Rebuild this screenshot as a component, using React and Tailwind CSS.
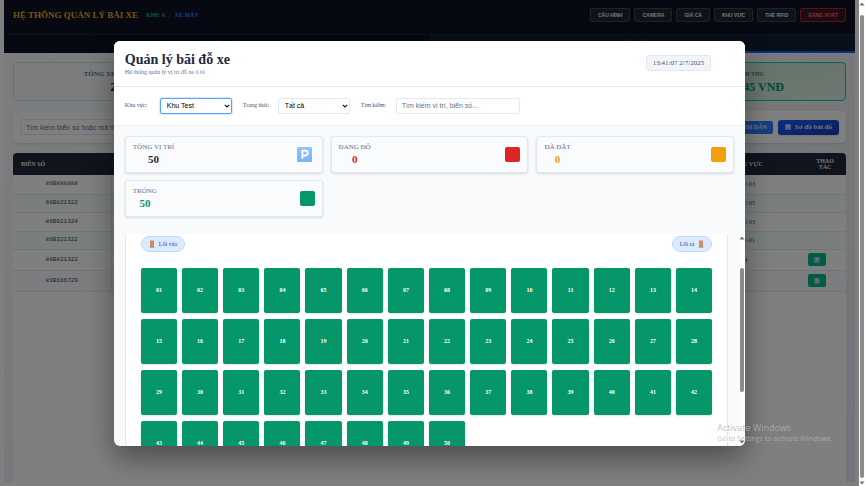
import { useState } from "react";

const menu = ["CẤU HÌNH", "CAMERA", "GIÁ CẢ", "KHU VỰC", "THẺ RFID"];

const vehicles = [
  { plate: "86B888888", time: "12:01:22", area: "KHU-03" },
  { plate: "66B821322", time: "12:14:05", area: "KHU-05" },
  { plate: "86B921324", time: "12:32:48", area: "KHU-03" },
  { plate: "86B321322", time: "12:40:10", area: "KHU-01" },
  { plate: "86B821322", time: "13:02:37", area: "Khu4", action: true },
  { plate: "81B166729", time: "13:20:51", area: "Khu", action: true },
];

const stats = [
  { label: "TỔNG VỊ TRÍ", value: 50, text: "text-slate-800" },
  { label: "ĐANG ĐỖ", value: 0, text: "text-[#dc2626]", box: "bg-[#dc2626]" },
  { label: "ĐÃ ĐẶT", value: 0, text: "text-[#f59e0b]", box: "bg-[#f59e0b]" },
  { label: "TRỐNG", value: 50, text: "text-[#059669]", box: "bg-[#059669]" },
];

const slots = Array.from({ length: 50 }, (_, i) => String(i + 1).padStart(2, "0"));

function ParkingIcon({ className }) {
  return (
    <svg viewBox="0 0 15 15" className={className} aria-hidden="true">
      <defs>
        <linearGradient id="parking" x1="0" y1="0" x2="0" y2="1">
          <stop offset="0" stopColor="#8fc5fd" />
          <stop offset="1" stopColor="#7fb0f2" />
        </linearGradient>
      </defs>
      <rect width="15" height="15" rx="1.2" fill="url(#parking)" />
      <path d="M5.4 11.8V3.6h2.9a2.4 2.4 0 0 1 0 4.9H5.4" fill="none" stroke="#fff" strokeWidth="1.8" />
    </svg>
  );
}

function DoorIcon() {
  return (
    <svg viewBox="0 0 6 8" className="h-2 w-[6px]" aria-hidden="true">
      <rect x="1" y="0.5" width="4" height="7" fill="#c9855a" />
      <rect x="1.6" y="1.3" width="2.8" height="5.4" fill="#d4905f" />
      <rect x="0.5" y="7.2" width="5" height="0.8" fill="#b9a79c" />
    </svg>
  );
}

function Arrow({ down }) {
  return (
    <svg viewBox="0 0 6 4" className="h-1 w-[6px] shrink-0" aria-hidden="true">
      <path d={down ? "M0.5 0.5h5L3 3.5z" : "M0.5 3.5h5L3 0.5z"} fill="#707070" />
    </svg>
  );
}

function Chevron() {
  return (
    <svg viewBox="0 0 6 4" className="pointer-events-none absolute right-[2px] top-[6px] h-1 w-[6px]" aria-hidden="true">
      <path d="M0.8 0.8L3 3L5.2 0.8" fill="none" stroke="#111" strokeWidth="1.1" />
    </svg>
  );
}

function Dashboard() {
  return (
    <div className="flex h-full flex-col px-1 pb-1">
      <header className="flex h-[34px] shrink-0 items-center bg-[#0c1222] px-[9px] pb-1">
        <h1 className="text-[9px] leading-3 font-bold text-[#e0ab1c]">HỆ THỐNG QUẢN LÝ BÃI XE</h1>
        <p className="ml-2 flex gap-1 text-[6px] leading-3 font-bold">
          <span className="text-emerald-500">KHU A</span>
          <span className="text-slate-600">|</span>
          <span className="text-blue-500">XE MÁY</span>
        </p>
        <nav className="ml-auto flex gap-1 font-['Liberation_Sans',sans-serif] text-[5px] leading-3 font-bold">
          {menu.map((item) => (
            <button key={item} className="h-[14px] rounded-[2px] border border-white/15 bg-white/8 px-[7px] text-slate-200">
              {item}
            </button>
          ))}
          <button className="h-[14px] rounded-[2px] border border-red-500/60 bg-red-500/20 px-[7px] text-red-400">
            ĐĂNG XUẤT
          </button>
        </nav>
      </header>

      <div className="grid h-[19px] shrink-0 grid-cols-2 border-t border-[#1a2233] text-[6px] font-bold">
        <button className="bg-[#0d1322] text-slate-400">QUẢN LÝ XE VÀO</button>
        <button className="border-b-2 border-blue-600 bg-[#131f35] text-blue-400">QUẢN LÝ XE RA</button>
      </div>

      <div className="flex grow flex-col bg-gradient-to-br from-slate-50 to-slate-200 px-[9px] pt-[9px]">
        <div className="grid grid-cols-4 gap-[10px] text-center">
          {[["TỔNG XE TRONG", "2"], ["XE VÀO", "6"], ["XE RA", "4"]].map(([label, value]) => (
            <div key={label} className="h-[39px] rounded-[4px] border border-slate-300/70 pt-[5px]">
              <p className="text-[7px] leading-3 font-bold text-slate-500">{label}</p>
              <p className="text-[12px] leading-[14px] font-bold text-slate-900">{value}</p>
            </div>
          ))}
          <div className="h-[39px] rounded-[4px] border border-emerald-400 bg-gradient-to-br from-[#c3e6d0] to-[#dcefe4] pt-[5px]">
            <p className="text-[6px] leading-3 font-bold text-slate-500">DOANH THU</p>
            <p className="text-[12px] leading-[14px] font-bold text-emerald-600">1,023,445 VNĐ</p>
          </div>
        </div>

        <div className="mt-[10px] flex h-8 items-center gap-[5px] rounded-[4px] bg-white px-[7px] shadow">
          <input
            type="text"
            aria-label="Tìm kiếm xe"
            placeholder="Tìm kiếm biển số hoặc mã thẻ..."
            className="h-4 grow rounded-[2px] border border-slate-200 px-[5px] font-['Liberation_Sans',sans-serif] text-[7px] placeholder:text-gray-500"
          />
          <button className="h-[13px] rounded-[2px] bg-blue-500 px-[6px] text-[6px] leading-3 font-bold text-slate-200">
            BẤM DẪN
          </button>
          <button className="flex h-[15px] items-center gap-1 rounded-[3px] bg-gradient-to-br from-blue-600 to-blue-800 px-[7px] text-[7px] leading-3 font-bold text-slate-200 shadow">
            <ParkingIcon className="size-[6px]" />
            Sơ đồ bãi đỗ
          </button>
        </div>

        <div className="mt-[10px] grow overflow-hidden rounded-t-[4px] bg-white">
          <table className="w-full table-fixed border-collapse text-left text-[6px] leading-[6px]">
            <thead>
              <tr className="h-[22px] bg-[#1e293b] text-slate-200">
                <th className="w-[98px] pl-2">BIỂN SỐ</th>
                <th className="pl-2">THỜI GIAN VÀO</th>
                <th className="w-[74px] pl-1">KHU VỰC</th>
                <th className="w-[42px] px-2 text-center">THAO TÁC</th>
              </tr>
            </thead>
            <tbody>
              {vehicles.map((v) => (
                <tr key={v.plate + v.time} className={v.action ? "h-[21px] border-b border-slate-200 even:bg-slate-50" : "border-b border-slate-200 odd:h-[19px] even:h-[18px] even:bg-emerald-50/60"}>
                  <td className="border-r border-slate-200 text-center font-['Liberation_Mono',monospace] text-slate-700">{v.plate}</td>
                  <td className="pl-2 text-slate-600">{v.time}</td>
                  <td className="pl-1 text-sky-700">{v.area}</td>
                  <td className="pl-1">
                    {v.action && (
                      <button aria-label="Đỗ xe" className="flex h-[13px] w-[18px] items-center justify-center rounded-[2px] bg-emerald-500">
                        <ParkingIcon className="size-[6px]" />
                      </button>
                    )}
                  </td>
                </tr>
              ))}
            </tbody>
          </table>
        </div>
      </div>
    </div>
  );
}

function ParkingModal() {
  const [area, setArea] = useState("Khu Test");
  const [status, setStatus] = useState("Tất cả");
  const [search, setSearch] = useState("");

  return (
    <div role="dialog" aria-labelledby="modal-title" className="flex h-[405px] max-h-[90%] w-[73.5%] flex-col overflow-hidden rounded-[6px] bg-[#f8fafc] shadow-[0_12px_28px_rgba(0,0,0,0.4)]">
      <div className="flex h-[46px] shrink-0 items-center justify-between border-b border-slate-200 bg-white pl-[11px] pr-[34px]">
        <div>
          <h2 id="modal-title" className="text-[14px] leading-[17px] font-bold text-slate-800">Quản lý bãi đỗ xe</h2>
          <p className="text-[6px] leading-2 text-slate-500">Hệ thống quản lý vị trí đỗ xe ô tô</p>
        </div>
        <time className="rounded-[3px] border border-slate-200 bg-slate-100 px-[6px] text-[7px] leading-[14px] text-slate-600">
          13:41:07 2/7/2025
        </time>
      </div>

      <div className="flex h-[39px] shrink-0 items-center gap-[11px] border-b border-slate-100 bg-white px-[11px] text-[6px] text-slate-600">
        <div className="flex items-center gap-2">
          <label htmlFor="area" className="w-[27px] whitespace-nowrap">Khu vực:</label>
          <div className="relative">
            <select id="area" value={area} onChange={(e) => setArea(e.target.value)} className="block h-4 w-[72px] appearance-none rounded-[2px] border border-blue-400 bg-white px-[6px] font-['Liberation_Sans',sans-serif] text-[7px] leading-[14px] text-black ring-1 ring-blue-100 outline-none">
              <option>Khu Test</option>
            </select>
            <Chevron />
          </div>
        </div>
        <div className="flex items-center gap-2">
          <label htmlFor="status" className="w-[27px] whitespace-nowrap">Trạng thái:</label>
          <div className="relative">
            <select id="status" value={status} onChange={(e) => setStatus(e.target.value)} className="block h-4 w-[72px] appearance-none rounded-[2px] border border-slate-200 bg-white px-[6px] font-['Liberation_Sans',sans-serif] text-[7px] leading-[14px] text-black outline-none">
              <option>Tất cả</option>
            </select>
            <Chevron />
          </div>
        </div>
        <div className="flex items-center gap-2">
          <label htmlFor="search" className="w-[27px] whitespace-nowrap">Tìm kiếm:</label>
          <input
            id="search"
            type="text"
            value={search}
            onChange={(e) => setSearch(e.target.value)}
            placeholder="Tìm kiếm vị trí, biển số..."
            className="h-4 w-[124px] rounded-[2px] border border-slate-200 px-[5px] font-['Liberation_Sans',sans-serif] text-[7px] outline-none placeholder:text-gray-500"
          />
        </div>
      </div>

      <div className="grid shrink-0 grid-cols-3 gap-x-2 gap-y-[7px] px-[11px] pt-[10px] pb-[17px]">
        {stats.map((s) => (
          <div key={s.label} className="flex h-[37px] items-center justify-between rounded-[3px] border border-slate-200 bg-[#fafbfd] px-[7px] shadow-sm">
            <div className="text-center">
              <p className="text-[7px] leading-[11px] text-slate-500">{s.label}</p>
              <p className={`text-[11px] leading-[13px] font-bold ${s.text}`}>{s.value}</p>
            </div>
            {s.box ? <span className={`size-[15px] rounded-[2px] ${s.box}`} /> : <ParkingIcon className="mr-[3px] size-[15px]" />}
          </div>
        ))}
      </div>

      <div className="flex min-h-0 grow">
        <div className="grow overflow-hidden px-[11px]">
          <div className="border-x border-slate-200 bg-white px-[15px] pt-[2px] pb-4">
            <div className="flex justify-between text-[6px] leading-[14px] text-blue-800">
              <span className="flex items-center gap-1 rounded-full border border-blue-200 bg-blue-100 px-[7px]">
                <DoorIcon /> Lối vào
              </span>
              <span className="flex items-center gap-1 rounded-full border border-blue-200 bg-blue-100 px-[7px]">
                Lối ra <DoorIcon />
              </span>
            </div>
            <div className="mt-4 grid grid-cols-14 gap-x-[5px] gap-y-[6px]">
              {slots.map((n) => (
                <button key={n} className="aspect-[4/5] rounded-[2px] bg-[#059669] text-[6px] font-bold text-white shadow-sm">
                  {n}
                </button>
              ))}
            </div>
          </div>
        </div>
        <div className="flex w-[6px] shrink-0 flex-col items-center bg-[#fcfcfc] py-[2px]">
          <Arrow />
          <div className="mt-[28px] h-[124px] w-1 rounded-full bg-[#8b8b8b]" />
          <div className="grow" />
          <Arrow down />
        </div>
      </div>
    </div>
  );
}

export default function App() {
  return (
    <div className="relative flex h-screen overflow-hidden bg-white font-['Liberation_Serif',serif]">
      <div className="relative min-w-0 grow">
        <Dashboard />
        <div className="absolute inset-0 flex items-center justify-center bg-black/50">
          <ParkingModal />
        </div>
      </div>

      <div className="flex w-[6px] shrink-0 flex-col items-center bg-[#fcfcfc] pt-[2px] pb-[1px]">
        <Arrow />
        <div className="mt-[9px] mb-[3px] w-1 grow rounded-full bg-[#8b8b8b]" />
        <Arrow down />
      </div>

      <div className="pointer-events-none absolute right-[33px] bottom-[43px] font-['Open_Sans',sans-serif] text-[#b4b4b4]/80">
        <p className="text-[9px] leading-3">Activate Windows</p>
        <p className="text-[7px] leading-[9px]">Go to Settings to activate Windows.</p>
      </div>
    </div>
  );
}
